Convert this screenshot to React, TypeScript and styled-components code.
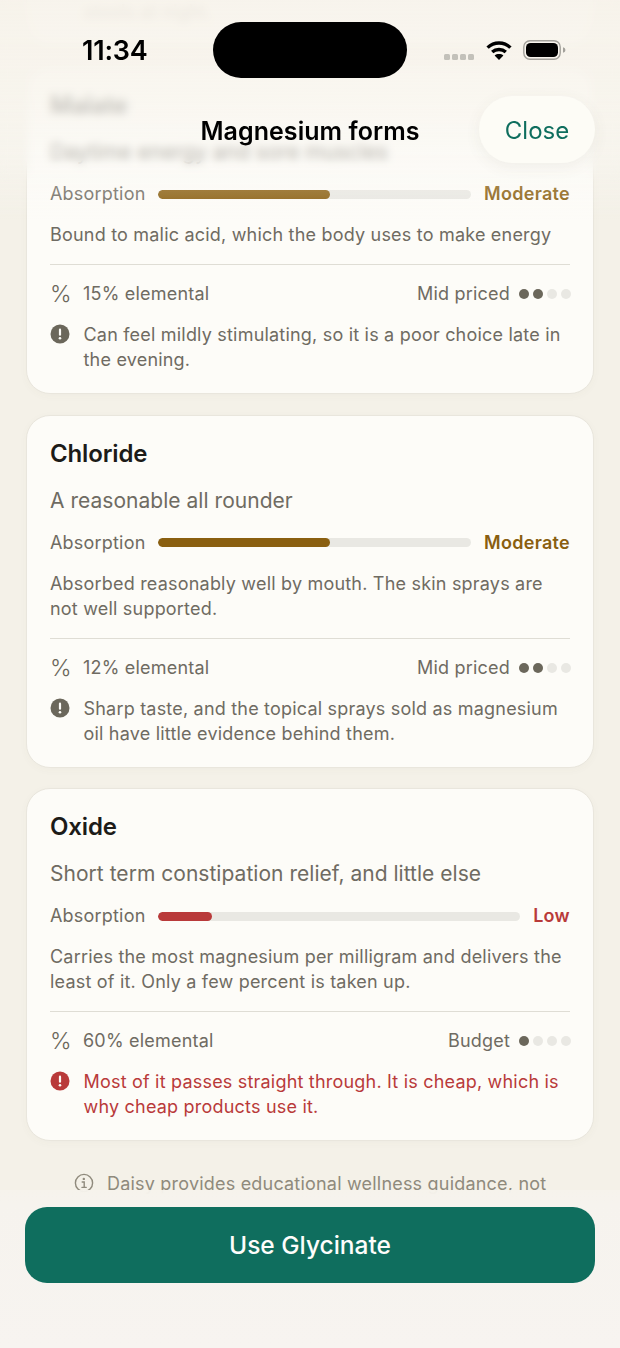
import React from 'react';
import styled, { createGlobalStyle } from 'styled-components';

interface IForm {
    name: string;
    use: string;
    level: string;
    levelColor: string;
    fill: number;
    description: string;
    elemental: string;
    price: string;
    priceDots: number;
    note: string;
    noteColor?: string;
}

const forms: IForm[] = [
    {
        name: 'Citrate',
        use: 'Regularity and general top ups',
        level: 'High',
        levelColor: '#0f6e5e',
        fill: 80,
        description: 'Dissolves well and is one of the better absorbed forms',
        elemental: '16% elemental',
        price: 'Budget',
        priceDots: 1,
        note: 'Pulls water into the gut, so large doses can loosen stools at night.',
    },
    {
        name: 'Malate',
        use: 'Daytime energy and sore muscles',
        level: 'Moderate',
        levelColor: '#8a5f10',
        fill: 55,
        description: 'Bound to malic acid, which the body uses to make energy',
        elemental: '15% elemental',
        price: 'Mid priced',
        priceDots: 2,
        note: 'Can feel mildly stimulating, so it is a poor choice late in the evening.',
    },
    {
        name: 'Chloride',
        use: 'A reasonable all rounder',
        level: 'Moderate',
        levelColor: '#8a5f10',
        fill: 55,
        description: 'Absorbed reasonably well by mouth. The skin sprays are not well supported.',
        elemental: '12% elemental',
        price: 'Mid priced',
        priceDots: 2,
        note: 'Sharp taste, and the topical sprays sold as magnesium oil have little evidence behind them.',
    },
    {
        name: 'Oxide',
        use: 'Short term constipation relief, and little else',
        level: 'Low',
        levelColor: '#b93a3a',
        fill: 15,
        description: 'Carries the most magnesium per milligram and delivers the least of it. Only a few percent is taken up.',
        elemental: '60% elemental',
        price: 'Budget',
        priceDots: 1,
        note: 'Most of it passes straight through. It is cheap, which is why cheap products use it.',
        noteColor: '#b93a3a',
    },
];

const AlertIcon = ({ color }: { color: string }) => (
    <svg width="20" height="20" viewBox="0 0 20 20">
        <circle cx="10" cy="10" r="9.5" fill={color} />
        <rect x="8.9" y="4.6" width="2.2" height="7.2" rx="1.1" fill="#fdfcf8" />
        <circle cx="10" cy="14.2" r="1.3" fill="#fdfcf8" />
    </svg>
);

const FormCard = ({ form }: { form: IForm }) => (
    <Card>
        <Name>{form.name}</Name>
        <Use>{form.use}</Use>
        <AbsorptionRow>
            <MetaText>Absorption</MetaText>
            <Track>
                <Fill $color={form.levelColor} style={{ width: `${form.fill}%` }} />
            </Track>
            <Level $color={form.levelColor}>{form.level}</Level>
        </AbsorptionRow>
        <Description>{form.description}</Description>
        <Divider />
        <MetaRow>
            <Percent>%</Percent>
            <MetaText>{form.elemental}</MetaText>
            <Price>{form.price}</Price>
            <Dots>
                {[0, 1, 2, 3].map((i) => (
                    <Dot key={i} $on={i < form.priceDots} />
                ))}
            </Dots>
        </MetaRow>
        <NoteRow>
            <NoteIcon>
                <AlertIcon color={form.noteColor || '#6b675b'} />
            </NoteIcon>
            <Note $color={form.noteColor}>{form.note}</Note>
        </NoteRow>
    </Card>
);

export default function App() {
    return (
        <Screen>
            <GlobalStyle />
            <List>
                {forms.map((form) => (
                    <FormCard key={form.name} form={form} />
                ))}
                <Disclaimer>
                    <svg width="20" height="20" viewBox="0 0 20 20" fill="none" stroke="#8f8a7c" strokeWidth="1.4">
                        <circle cx="10" cy="10" r="8.6" />
                        <path d="M8.2 9h2v5.4M8 14.4h4.2" strokeLinecap="round" />
                        <circle cx="9.8" cy="5.9" r="0.5" fill="#8f8a7c" />
                    </svg>
                    <span>Daisy provides educational wellness guidance, not medical advice.</span>
                </Disclaimer>
            </List>

            <TopBlur />
            <TopFade />
            <StatusBar>
                <Time>11:34</Time>
                <Island />
                <StatusIcons>
                    <SignalDots>
                        <i />
                        <i />
                        <i />
                        <i />
                    </SignalDots>
                    <svg width="26" height="20" viewBox="0 0 26 20" fill="none" stroke="#000" strokeWidth="3.4">
                        <path d="M1.6 7.6C8 1.4 18 1.4 24.4 7.6" />
                        <path d="M6.2 12c3.8-3.4 9.8-3.4 13.6 0" />
                        <path d="M13 20l-4.4-4.6c2.4-1.9 6.4-1.9 8.8 0z" fill="#000" stroke="none" />
                    </svg>
                    <svg width="43" height="20" viewBox="0 0 43 20">
                        <rect x="0.8" y="0.8" width="36.4" height="18.4" rx="6.2" fill="none" stroke="#a3a19b" strokeWidth="1.4" />
                        <rect x="3" y="3" width="32" height="14" rx="4.6" fill="#000" />
                        <path d="M40 7.2c1.6.5 2.4 1.5 2.4 2.8s-.8 2.3-2.4 2.8z" fill="#a3a19b" />
                    </svg>
                </StatusIcons>
            </StatusBar>
            <NavBar>
                <NavTitle>Magnesium forms</NavTitle>
                <CloseButton>Close</CloseButton>
            </NavBar>

            <Footer>
                <PrimaryButton>Use Glycinate</PrimaryButton>
            </Footer>
        </Screen>
    );
}

const GlobalStyle = createGlobalStyle`
    html, body {
        margin: 0;
        padding: 0;
        background: #f6f3ec;
    }
    * {
        box-sizing: border-box;
    }
`;

const Screen = styled.div`
    position: relative;
    width: 620px;
    height: 1348px;
    overflow: hidden;
    background: #f4f1e8;
    font-family: Inter, "Liberation Sans", sans-serif;
    color: #6b675e;
`;

const List = styled.div`
    display: flex;
    flex-direction: column;
    gap: 20.5px;
    margin-top: -282.5px;
    padding: 0 26px;
`;

const Card = styled.div`
    padding: 24px 23px 21px;
    background: #fdfcf8;
    border: 1px solid #e9e6dd;
    border-radius: 24px;
    box-shadow: 0 2px 8px rgba(90, 80, 50, 0.03);
`;

const Name = styled.div`
    font-size: 24px;
    line-height: 28px;
    font-weight: 600;
    letter-spacing: -0.15px;
    color: #1c1b18;
`;

const Use = styled.div`
    margin-top: 20px;
    font-size: 21px;
    line-height: 26px;
    letter-spacing: 0.03px;
    color: #6f6b62;
`;

const AbsorptionRow = styled.div`
    display: flex;
    align-items: center;
    gap: 13px;
    height: 24px;
    margin-top: 17px;
`;

const MetaText = styled.span`
    font-size: 18px;
    line-height: 24px;
    letter-spacing: 0.2px;
    color: #6f6b62;
    white-space: nowrap;
`;

const Track = styled.div`
    flex: 1;
    height: 9px;
    margin-left: -1px;
    border-radius: 5px;
    background: #e9e8e3;
    overflow: hidden;
`;

const Fill = styled.div<{ $color: string }>`
    height: 100%;
    border-radius: 5px;
    background: ${(p) => p.$color};
`;

const Level = styled.span<{ $color: string }>`
    font-size: 18px;
    line-height: 24px;
    font-weight: 600;
    letter-spacing: 0.3px;
    color: ${(p) => p.$color};
`;

const Description = styled.div`
    margin-top: 16px;
    font-size: 18px;
    line-height: 25px;
    letter-spacing: 0.2px;
    color: #6f6b62;
`;

const Divider = styled.div`
    height: 1px;
    margin-top: 17px;
    background: #dfddd5;
`;

const MetaRow = styled.div`
    display: flex;
    align-items: center;
    height: 24px;
    margin-top: 17px;
`;

const Percent = styled.span`
    width: 33px;
    font-size: 23px;
    line-height: 24px;
    font-weight: 300;
    color: #6b675b;
`;

const Price = styled.span`
    margin-left: auto;
    font-size: 18px;
    line-height: 24px;
    letter-spacing: 0.2px;
    color: #6f6b62;
`;

const Dots = styled.div`
    display: flex;
    gap: 4px;
    margin-left: 9px;
    margin-right: -1px;
`;

const Dot = styled.div<{ $on: boolean }>`
    width: 10px;
    height: 10px;
    border-radius: 50%;
    background: ${(p) => (p.$on ? '#6b675b' : '#e9e8e3')};
`;

const NoteRow = styled.div`
    display: flex;
    margin-top: 16px;
`;

const NoteIcon = styled.div`
    flex: 0 0 33.5px;
    padding-top: 2px;
`;

const Note = styled.div<{ $color?: string }>`
    font-size: 18px;
    line-height: 25px;
    letter-spacing: 0.2px;
    color: ${(p) => p.$color || '#6f6b62'};
`;

const Disclaimer = styled.div`
    display: flex;
    gap: 13px;
    padding: 9px 40px 0 48px;
    font-size: 18px;
    line-height: 25px;
    letter-spacing: 0.2px;
    color: #8f8a7c;
    svg {
        flex: none;
        margin-top: 2px;
    }
`;

const TopBlur = styled.div`
    position: absolute;
    top: 0;
    left: 0;
    right: 0;
    height: 190px;
    backdrop-filter: blur(4px);
    mask-image: linear-gradient(to bottom, #000 160px, transparent 182px);
`;

const TopFade = styled.div`
    position: absolute;
    top: 0;
    left: 0;
    right: 0;
    height: 220px;
    background: linear-gradient(
        to bottom,
        rgba(247, 243, 235, 0.92) 0,
        rgba(248, 245, 238, 0.8) 100px,
        rgba(250, 248, 243, 0.5) 155px,
        rgba(250, 248, 243, 0.2) 190px,
        rgba(250, 248, 243, 0) 220px
    );
`;

const StatusBar = styled.div`
    position: absolute;
    top: 22px;
    left: 0;
    right: 0;
    display: flex;
    justify-content: center;
`;

const Time = styled.div`
    position: absolute;
    left: 82px;
    top: 13px;
    font-size: 27px;
    line-height: 32px;
    font-weight: 600;
    letter-spacing: -0.2px;
    color: #000;
`;

const Island = styled.div`
    width: 194px;
    height: 56px;
    border-radius: 28px;
    background: #000;
`;

const StatusIcons = styled.div`
    position: absolute;
    left: 444px;
    top: 18px;
    display: flex;
    align-items: center;
    gap: 11px;
`;

const SignalDots = styled.div`
    display: flex;
    gap: 2px;
    margin-top: 14px;
    margin-right: 1px;
    i {
        display: block;
        width: 6px;
        height: 6px;
        border-radius: 1.5px;
        background: #c3c1ba;
    }
`;

const NavBar = styled.div`
    position: absolute;
    top: 96px;
    left: 25px;
    right: 25px;
    height: 67px;
    display: flex;
    align-items: center;
    justify-content: flex-end;
`;

const NavTitle = styled.div`
    position: absolute;
    left: 0;
    right: 0;
    top: 20px;
    text-align: center;
    font-size: 25px;
    line-height: 30px;
    font-weight: 600;
    letter-spacing: 0.05px;
    color: #000;
`;

const CloseButton = styled.button`
    position: relative;
    width: 116px;
    height: 67px;
    padding: 2px 0 0;
    border: none;
    border-radius: 34px;
    background: #fdfcf6;
    box-shadow: 0 4px 16px rgba(90, 80, 50, 0.07);
    font-family: inherit;
    font-size: 24px;
    color: #0f6e5e;
`;

const Footer = styled.div`
    position: absolute;
    left: 0;
    right: 0;
    bottom: 0;
    height: 158px;
    padding: 17px 25px 0;
    background: linear-gradient(to bottom, rgba(246, 243, 236, 0.96) 0, #f6f3ee 14px, #f7f4f0 100%);
`;

const PrimaryButton = styled.button`
    display: block;
    width: 100%;
    height: 76px;
    border: none;
    border-radius: 22px;
    background: #0f6e5e;
    font-family: inherit;
    font-size: 24.5px;
    font-weight: 500;
    color: #fdfdfb;
`;
